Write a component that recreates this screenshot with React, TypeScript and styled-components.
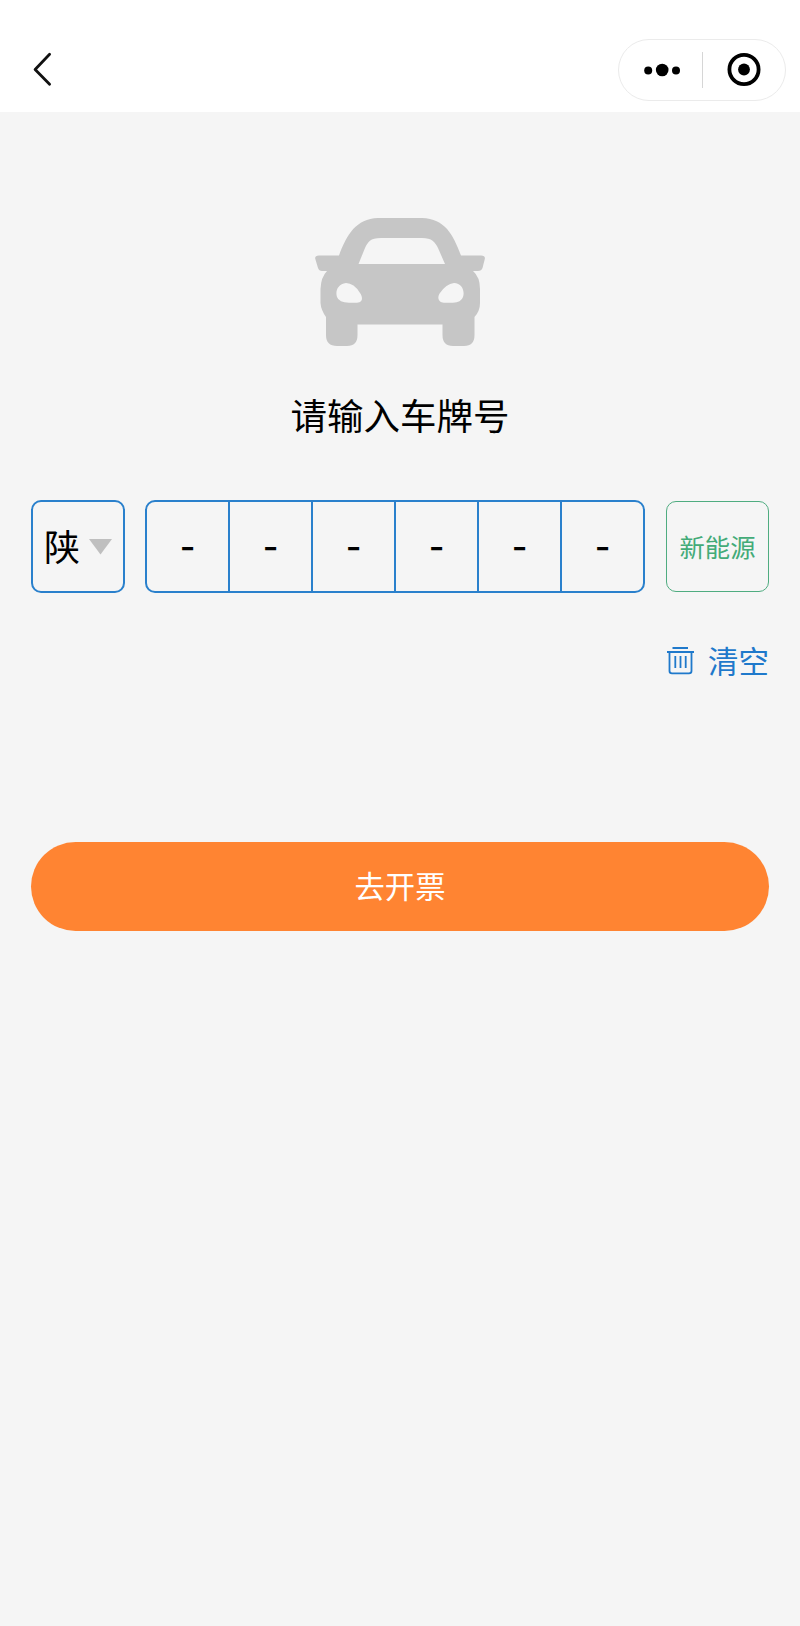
import React from 'react';
import styled, { createGlobalStyle } from 'styled-components';

const GlobalStyle = createGlobalStyle`
  * { box-sizing: border-box; }
  body {
    margin: 0;
    background: #f5f5f5;
    font-family: "Noto Sans CJK SC", "Noto Sans", sans-serif;
  }
  button { font-family: inherit; background: none; border: 0; padding: 0; margin: 0; }
`;

const Page = styled.div`
  min-height: 1626px;
  background: #f5f5f5;
  color: #000;
`;

const Header = styled.header`
  height: 112px;
  padding: 39px 14px 0 30px;
  display: flex;
  justify-content: space-between;
  align-items: flex-start;
  background: #fff;
`;

const BackButton = styled.button`
  display: block;
  width: 24px;
  height: 61px;
`;

const Capsule = styled.div`
  width: 168px;
  height: 62px;
  border: 1px solid #ebebeb;
  border-radius: 31px;
  background: #fff;
  display: flex;
  align-items: center;
`;

const CapsuleAction = styled.button<{ $width: number }>`
  display: flex;
  align-items: center;
  justify-content: center;
  width: ${(p) => p.$width}px;
  height: 60px;
`;

const Divider = styled.div`
  width: 1px;
  height: 36px;
  background: #d6d6d6;
`;

const Main = styled.main`
  padding: 106px 31px 0;
  display: flex;
  flex-direction: column;
`;

const CarIcon = styled.svg`
  display: block;
  align-self: center;
`;

const Title = styled.h1`
  margin: 41px 0 0;
  font-size: 36.5px;
  line-height: 56px;
  font-weight: 400;
  text-align: center;
`;

const PlateRow = styled.div`
  margin-top: 57px;
  display: flex;
  justify-content: space-between;
  align-items: center;
  height: 93px;
`;

const Province = styled.button`
  width: 94px;
  height: 93px;
  border: 2px solid #2a80cc;
  border-radius: 10px;
  display: flex;
  align-items: center;
  padding-left: 11px;
  gap: 9px;
  font-size: 36px;
  line-height: 50px;
  color: #000;
`;

const ProvinceName = styled.span`
  padding-bottom: 3px;
`;

const Cells = styled.div`
  width: 500px;
  height: 93px;
  margin-left: -1px;
  border: 2px solid #2a80cc;
  border-radius: 10px;
  display: grid;
  grid-template-columns: repeat(5, 83px) 1fr;
`;

const Cell = styled.div`
  display: flex;
  align-items: center;
  justify-content: center;
  padding-top: 1px;
  font-family: Inter, sans-serif;
  font-size: 34px;
  line-height: 50px;
  font-weight: 500;
  border-right: 2px solid #2a80cc;
  &:last-child { border-right: 0; }
`;

const EnergyButton = styled.button`
  width: 103px;
  height: 91px;
  padding-bottom: 2px;
  border: 1px solid #4fac80;
  border-radius: 10px;
  color: #43ab78;
  font-size: 25.3px;
  line-height: 38px;
`;

const ClearButton = styled.button`
  align-self: flex-end;
  margin-top: 45px;
  height: 44px;
  display: flex;
  align-items: center;
  gap: 14px;
  color: #1f79cb;
  font-size: 30.5px;
  line-height: 44px;
`;

const SubmitButton = styled.button`
  margin-top: 160px;
  height: 89px;
  padding-bottom: 4px;
  border-radius: 45px;
  background: #ff8432;
  color: #fff;
  font-size: 30.3px;
  line-height: 44px;
`;

const cells = ['-', '-', '-', '-', '-', '-'];

export default function App() {
  return (
    <Page>
      <GlobalStyle />
      <Header>
        <BackButton aria-label="返回">
          <svg width="24" height="61" viewBox="0 0 24 61" fill="none">
            <path d="M19.600 15.300 L5.100 30.500 L19.600 45.300" stroke="#111" strokeWidth="2.8" strokeLinecap="round" strokeLinejoin="round" />
          </svg>
        </BackButton>
        <Capsule>
          <CapsuleAction $width={83} aria-label="更多">
            <svg width="38" height="16" viewBox="0 0 38 16">
              <circle cx="6.200" cy="8.500" r="4" />
              <circle cx="20.200" cy="8" r="6.300" />
              <circle cx="34" cy="8.500" r="4" />
            </svg>
          </CapsuleAction>
          <Divider />
          <CapsuleAction $width={82} aria-label="关闭">
            <svg width="34" height="34" viewBox="0 0 34 34">
              <circle cx="17" cy="16.5" r="14.6" fill="none" stroke="#000" strokeWidth="3.8" />
              <circle cx="17" cy="16.5" r="5.9" />
            </svg>
          </CapsuleAction>
        </Capsule>
      </Header>
      <Main>
        <CarIcon width="170" height="128" viewBox="0 0 170 128" fill="#c6c6c6" fillRule="evenodd">
          <path d="M63 0 H107 C130 1 138 16 146 37.500 H166 Q170.500 37.500 169.800 41 L167.500 50 Q166.500 53 163 53 H158 Q165 59 165 71 V85 Q165 93 159.500 99 V117 Q159.500 128 149 128 H138 Q127.500 128 127.500 117 V106.500 H42.500 V117 Q42.500 128 32 128 H22 Q11 128 11 117 V99 Q6 92 5.500 85 V71 Q6 59 12 53 H7 Q4 53 3 50 L.300 41 Q-.500 37.500 4 37.500 H24 C32 16 41 1 63 0 Z
            M66 20 C55 20 53 24 50 30 L43.500 46 H130 L123 30 C120 24 117 20 107 20 Z
            M31 65 C23 66 20 73 22 79 Q24 84.700 34 84.700 H42 C48 84.700 48 79 45 75 Q39 65 31 65 Z
            M139 65 C147 65 150 73 148 79 Q146 84.700 138 84.700 H129 C123 84.700 122 79 125 75 Q131 66 139 65 Z" />
        </CarIcon>
        <Title>请输入车牌号</Title>
        <PlateRow>
          <Province>
            <ProvinceName>陕</ProvinceName>
            <svg width="23" height="16" viewBox="0 0 23 16"><path d="M0 0 H23 L11.500 15.500 Z" fill="#bfbfbf" /></svg>
          </Province>
          <Cells>
            {cells.map((c, i) => <Cell key={i}>{c}</Cell>)}
          </Cells>
          <EnergyButton>新能源</EnergyButton>
        </PlateRow>
        <ClearButton>
          <svg width="27" height="29" viewBox="0 0 27 29" fill="none" stroke="currentColor" strokeWidth="1.8">
            <path d="M5.500 2 H21 M0 6 H27 M2.500 6 V25 Q2.500 27.300 5 27.300 H22 Q24.500 27.300 24.500 25 V6 M8.300 9.900 V22 M13.500 9.900 V22 M18.700 9.900 V22" />
          </svg>
          <span>清空</span>
        </ClearButton>
        <SubmitButton>去开票</SubmitButton>
      </Main>
    </Page>
  );
}
